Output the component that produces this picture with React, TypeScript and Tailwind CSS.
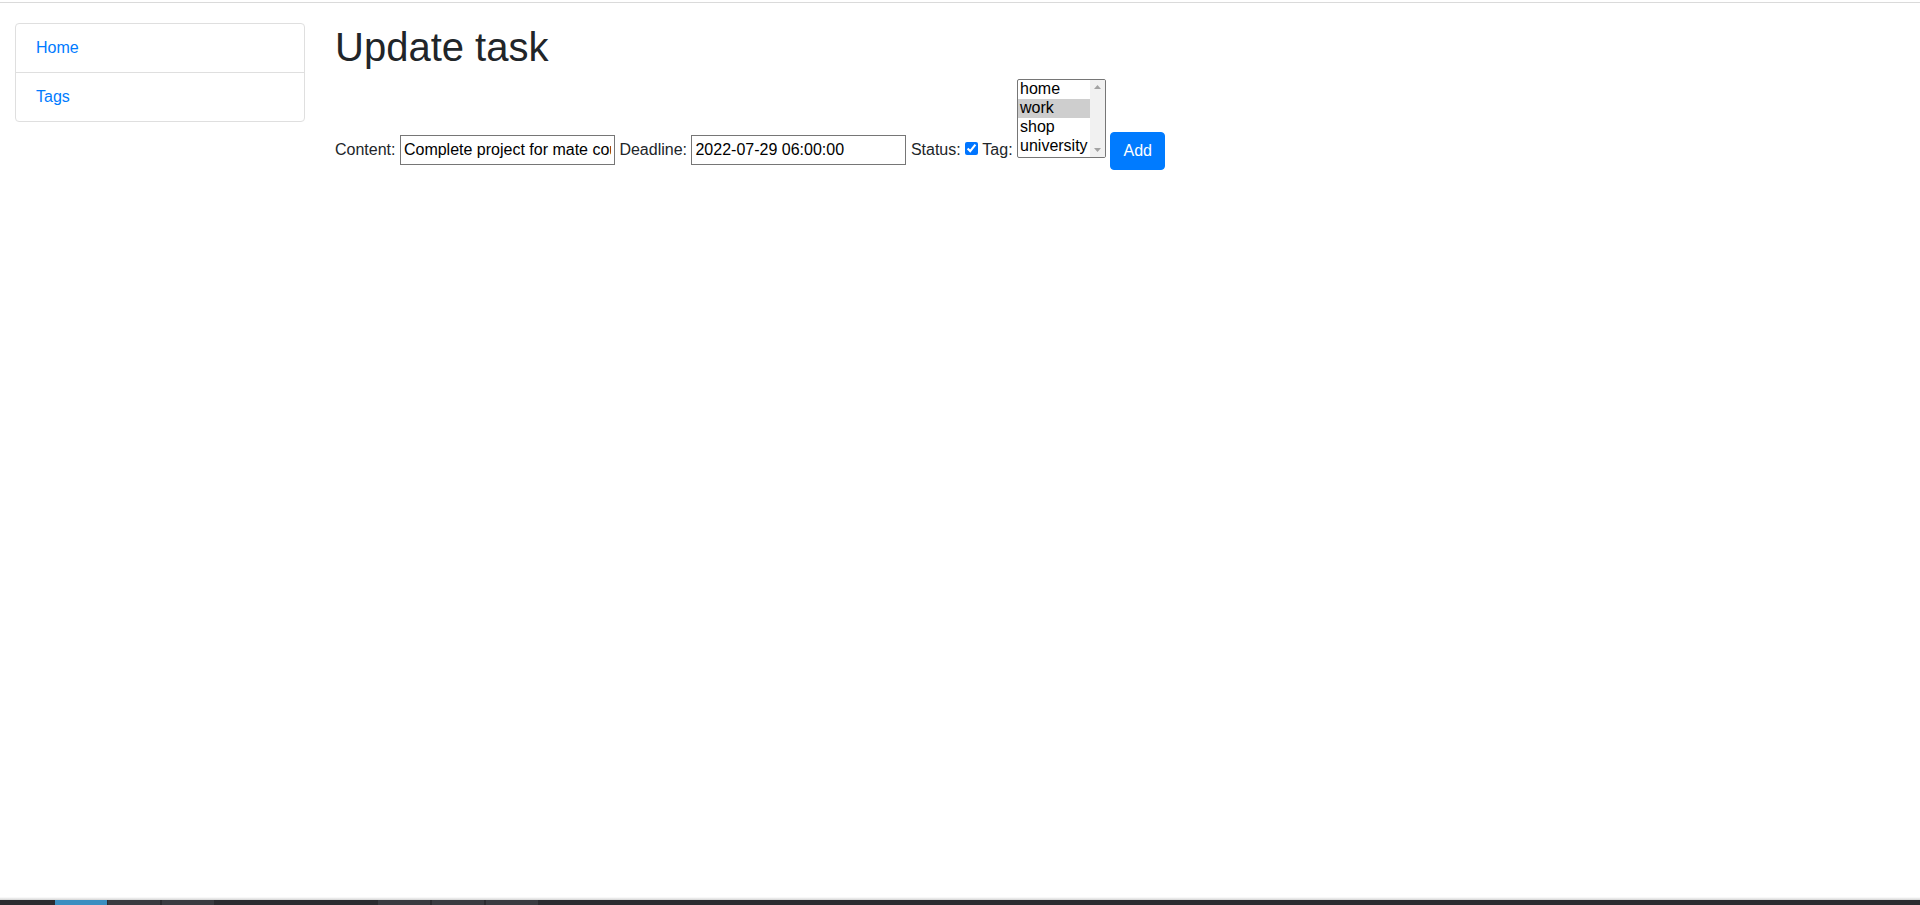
import * as React from 'react';

const font = { fontFamily: '"Liberation Sans", Arial, sans-serif' };

const tags = ['home', 'work', 'shop', 'university'];

const NavItem: React.FC<{ label: string; last?: boolean }> = ({ label, last }) => (
  <a
    href="#"
    className={`block px-5 py-3 leading-6 text-[#007bff] ${last ? '' : 'border-b border-[#dfdfdf]'}`}
  >
    {label}
  </a>
);

const TaskbarSlot: React.FC<{ active?: boolean; className?: string }> = ({ active, className }) => (
  <div className={`h-full w-[52px] ${active ? 'bg-[#3b8ec0]' : 'bg-[#3a3c41]'} ${className ?? ''}`} />
);

// listbox drawn by hand so the classic (disabled) scrollbar shows like in the reference
const TagList: React.FC<{ selected: string; onSelect: (t: string) => void }> = ({ selected, onSelect }) => (
  <div
    role="listbox"
    className="-mb-[3px] inline-block h-[79px] w-[89px] overflow-hidden rounded-[2px] border border-[#767676] align-baseline text-black"
  >
    <div className="flex h-full">
      <div className="flex-1">
        {tags.map((t) => (
          <div
            key={t}
            role="option"
            aria-selected={t === selected}
            onClick={() => onSelect(t)}
            className={`h-[19px] px-[2px] pb-px leading-[18px] ${t === selected ? 'bg-[#cecece]' : ''}`}
          >
            {t}
          </div>
        ))}
      </div>
      <div className="flex w-[15px] flex-col items-center justify-between bg-[#f1f1f1] py-[5px]">
        <svg width="7" height="4" viewBox="0 0 7 4">
          <path d="M3.5 0L7 4H0z" fill="#a3a3a3" />
        </svg>
        <svg width="7" height="4" viewBox="0 0 7 4">
          <path d="M0 0h7L3.5 4z" fill="#a3a3a3" />
        </svg>
      </div>
    </div>
  </div>
);

export default function App() {
  const [tag, setTag] = React.useState('work');

  return (
    <div className="flex h-[905px] w-full flex-col bg-white text-base leading-6 text-[#212529]" style={font}>
      <div className="h-[2px]" />
      <div className="h-px bg-[#dadada]" />

      <div className="flex flex-1 pt-5">
        <div className="w-[320px] shrink-0 px-[15px]">
          <div className="rounded-[4px] border border-[#dfdfdf]">
            <NavItem label="Home" />
            <NavItem label="Tags" last />
          </div>
        </div>

        <div className="flex-1 px-[15px]">
          <h1 className="mb-2 text-[40px] font-medium leading-[1.2]">Update task</h1>
          <form onSubmit={(e) => e.preventDefault()}>
            <label>Content:</label>{' '}
            <input
              type="text"
              defaultValue="Complete project for mate course"
              className="h-[30px] w-[215px] border border-[#767676] px-[3px] text-black"
            />{' '}
            <label>Deadline:</label>{' '}
            <input
              type="text"
              defaultValue="2022-07-29 06:00:00"
              className="h-[30px] w-[215px] border border-[#767676] px-[3px] text-black"
            />{' '}
            <label>Status:</label>{' '}
            <input type="checkbox" defaultChecked className="h-[13px] w-[13px]" />{' '}
            <label>Tag:</label>{' '}
            <TagList selected={tag} onSelect={setTag} />{' '}
            <button
              type="submit"
              className="rounded-[4px] border border-[#007bff] bg-[#007bff] px-3 py-1.5 align-middle leading-6 text-white"
            >
              Add
            </button>
          </form>
        </div>
      </div>

      <div className="h-[3px] bg-gradient-to-b from-white to-[#d4d4d4]" />
      <div className="flex h-[5px] bg-[#2b2c30]">
        <TaskbarSlot active className="ml-[55px]" />
        <TaskbarSlot className="ml-px" />
        <TaskbarSlot className="ml-[2px]" />
        <TaskbarSlot className="ml-[164px]" />
        <TaskbarSlot className="ml-[2px]" />
        <TaskbarSlot className="ml-[2px]" />
      </div>
    </div>
  );
}
